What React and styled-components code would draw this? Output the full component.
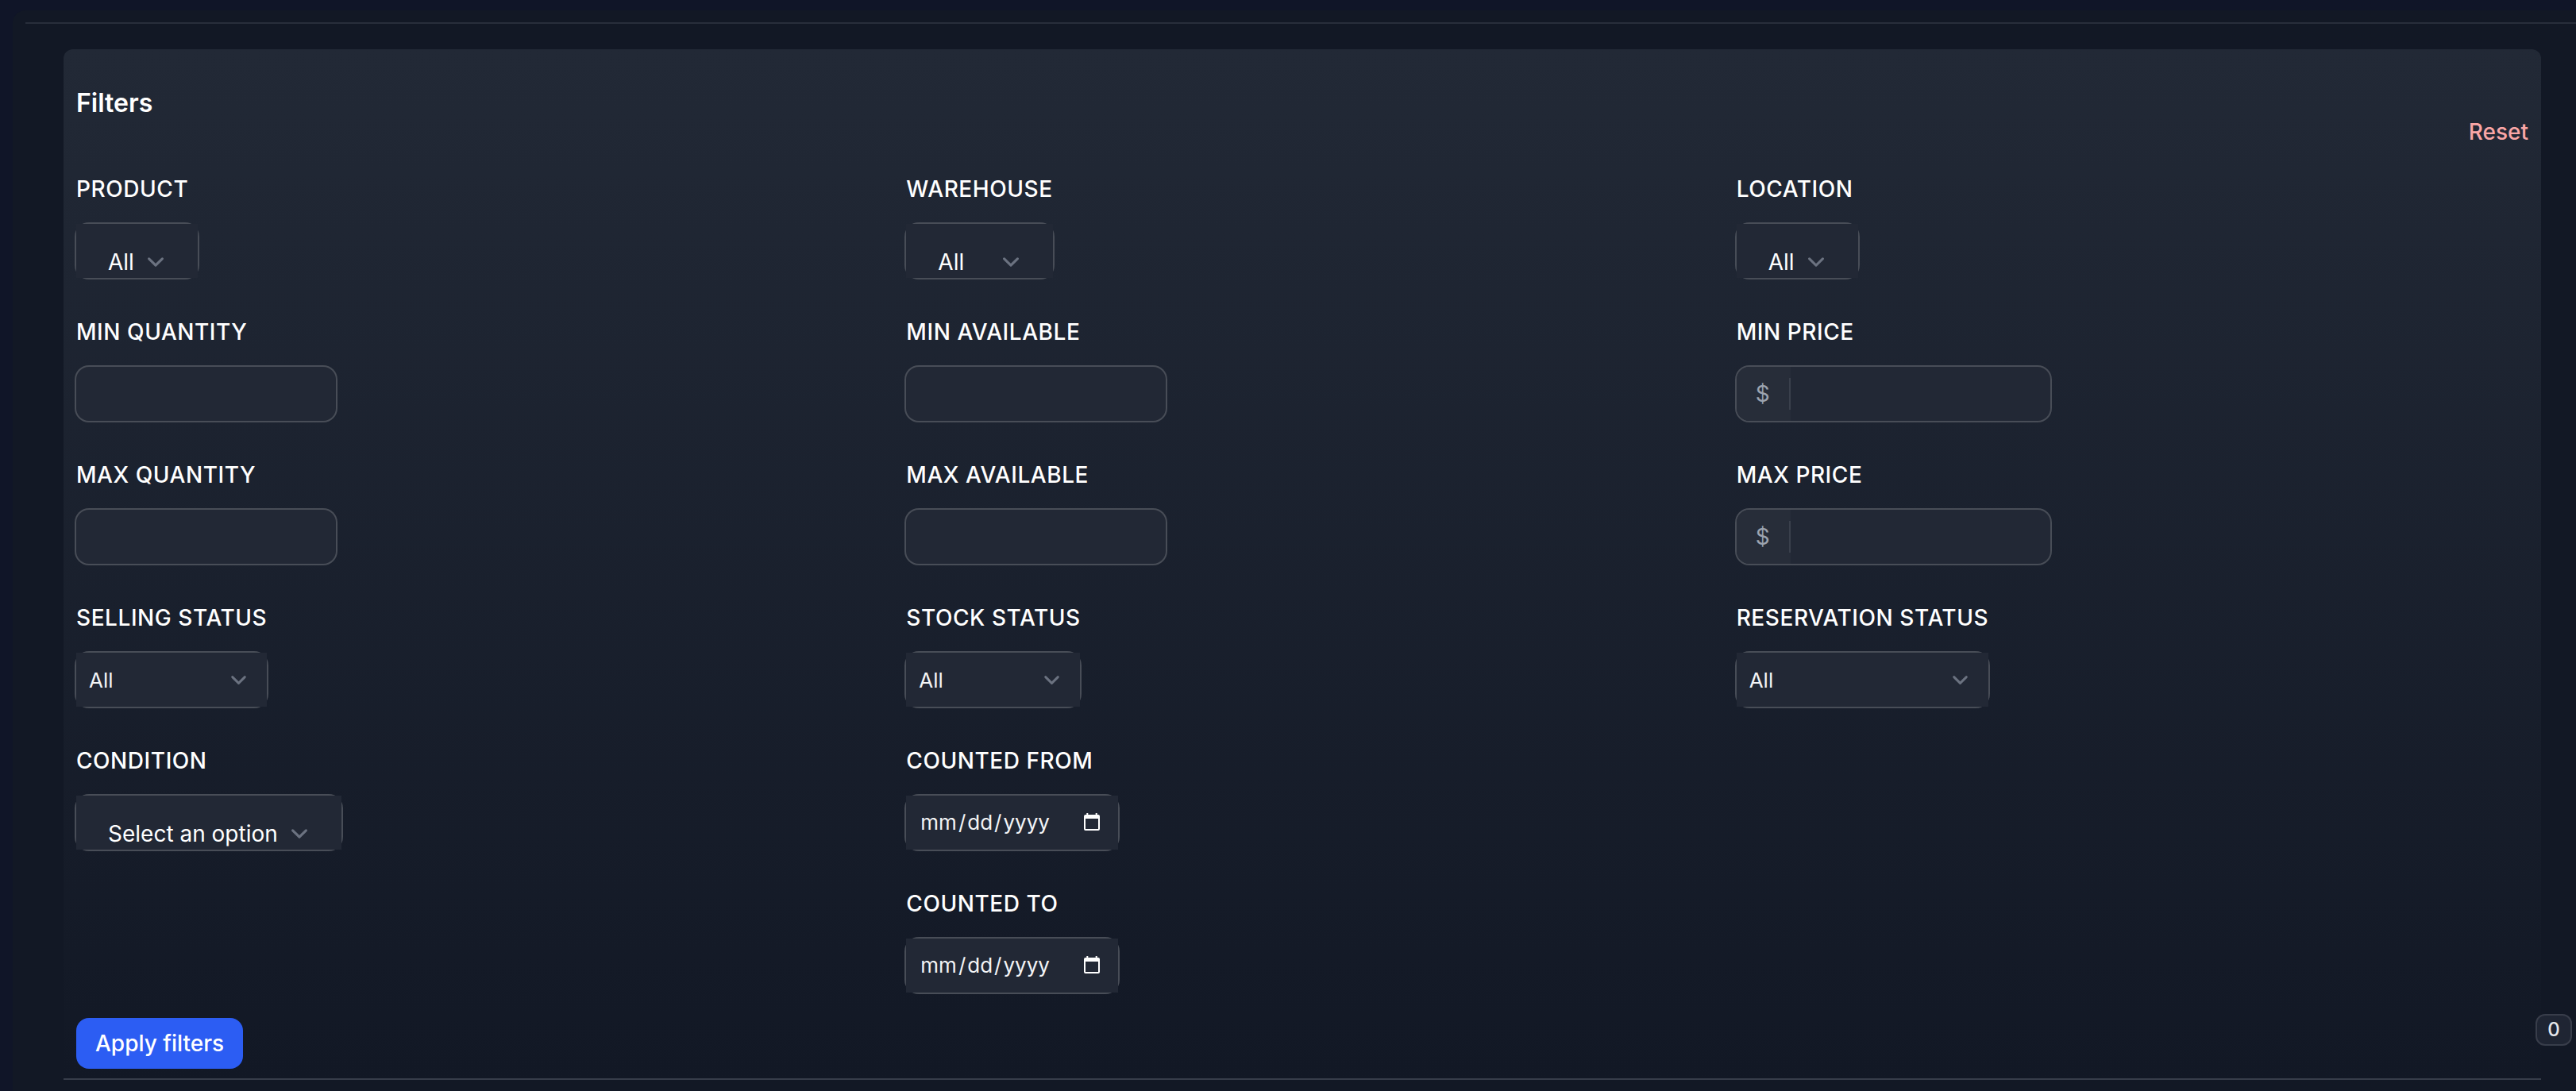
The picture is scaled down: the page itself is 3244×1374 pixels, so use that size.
import React, { useState } from 'react';
import styled, { createGlobalStyle } from 'styled-components';

const GlobalStyle = createGlobalStyle`
  * {
    box-sizing: border-box;
  }

  body {
    margin: 0;
    background: #101528;
    color: #fff;
    font-family: Inter, 'Liberation Sans', sans-serif;
    font-size: 28px;
    line-height: 40px;
    overflow: hidden;
    -webkit-font-smoothing: antialiased;
  }
`;

const Page = styled.div`
  height: 1374px;
  padding: 13px 0 0 16px;
  overflow: hidden;
`;

const Card = styled.div`
  height: 1400px;
  padding: 15px 0 0 16px;
  background: #121825;
  border-top-left-radius: 16px;
`;

const Section = styled.div`
  border-top: 2px solid #282e3b;
  padding: 32px 44px 0 48px;
`;

const Panel = styled.form`
  display: flex;
  flex-direction: column;
  height: 1298px;
  padding: 44px 16px 0;
  border-bottom: 2px solid #373d4a;
  border-radius: 12px 12px 0 0;
  background: linear-gradient(to bottom, #222936, #121825);
`;

const Title = styled.h2`
  margin: 0;
  font-size: 32px;
  font-weight: 600;
  line-height: 48px;
`;

const ResetLink = styled.button`
  align-self: flex-end;
  margin-top: -8px;
  padding: 0;
  border: none;
  background: none;
  color: #faa6a6;
  font: inherit;
  font-weight: 500;
  cursor: pointer;
`;

const Columns = styled.div`
  display: grid;
  grid-template-columns: repeat(3, 1fr);
  gap: 48px;
  margin-top: 32px;
`;

const Column = styled.div`
  display: flex;
  flex-direction: column;
  align-items: flex-start;
  gap: 48px;
`;

const Field = styled.div`
  display: flex;
  flex-direction: column;
  align-items: flex-start;
  gap: 24px;
`;

const Label = styled.label`
  font-weight: 500;
  letter-spacing: 0.02em;
  text-transform: uppercase;
`;

const Ring = styled.div`
  display: flex;
  height: 68px;
  width: ${props => props.$width}px;
  border-radius: 16px;
  box-shadow: 0 0 0 2px #484d57;
  background: #222835;
`;

/* The control is square, so it covers the rounded corners of its ring */
const Control = styled.div`
  display: flex;
  align-items: center;
  justify-content: space-between;
  width: 100%;
  height: 68px;
  padding: ${props => (props.$nested ? '28px 32px 0 40px' : '0 16px')};
  background: #222835;
  font-size: ${props => (props.$nested ? 28 : 26)}px;
  color: ${props => (props.$nested ? '#fff' : '#f3f4f6')};
  white-space: nowrap;
`;

const SelectValue = styled.span`
  padding-top: ${props => (props.$nested ? 0 : 2)}px;
`;

const Chevron = styled.svg`
  flex: none;
  width: 1.5em;
  height: 1.5em;
  fill: none;
  stroke: #6b7280;
  stroke-width: 1.5;
  stroke-linecap: round;
  stroke-linejoin: round;
`;

const TextInput = styled.input`
  width: 100%;
  padding: 0 24px;
  border: none;
  outline: none;
  background: transparent;
  color: #fff;
  font: inherit;
`;

const Prefix = styled.div`
  display: flex;
  flex: none;
  align-items: center;
  width: 68px;
  border-radius: 16px 0 0 16px;
  background: #272d39;
  color: #9ca3af;

  span {
    flex: 1;
    padding-left: 24px;
    border-right: 2px solid #3a404c;
  }
`;

const DateControl = styled(Control)`
  padding: 0 22px 0 16px;
`;

const DateText = styled.span`
  display: flex;

  span {
    padding: 0 2px;
  }
`;

const CalendarIcon = styled.svg`
  width: 22px;
  height: 24px;
  fill: #fff;
`;

const ApplyButton = styled.button`
  align-self: flex-start;
  height: 64px;
  margin-top: 32px;
  padding: 0 24px;
  border: none;
  border-radius: 16px;
  background: #2c5df3;
  color: #fff;
  font: inherit;
  font-weight: 500;
  cursor: pointer;
`;

const CountBadge = styled.div`
  position: absolute;
  left: 3193px;
  top: 1277px;
  width: 46px;
  height: 40px;
  border: 2px solid #383d4a;
  border-radius: 12px;
  background: #1f2533;
  color: #e5e7eb;
  font-size: 24px;
  font-weight: 500;
  line-height: 36px;
  text-align: center;
`;

const columns = [
  [
    { label: 'Product', type: 'nested', value: 'All', width: 153 },
    { label: 'Min quantity', type: 'text', width: 327 },
    { label: 'Max quantity', type: 'text', width: 327 },
    { label: 'Selling status', type: 'select', value: 'All', width: 240 },
    { label: 'Condition', type: 'nested', value: 'Select an option', width: 334 },
  ],
  [
    { label: 'Warehouse', type: 'nested', value: 'All', width: 185 },
    { label: 'Min available', type: 'text', width: 327 },
    { label: 'Max available', type: 'text', width: 327 },
    { label: 'Stock status', type: 'select', value: 'All', width: 219 },
    { label: 'Counted from', type: 'date', width: 267 },
    { label: 'Counted to', type: 'date', width: 267 },
  ],
  [
    { label: 'Location', type: 'nested', value: 'All', width: 153 },
    { label: 'Min price', type: 'price', width: 395 },
    { label: 'Max price', type: 'price', width: 395 },
    { label: 'Reservation status', type: 'select', value: 'All', width: 317 },
  ],
];

function Select({ value, nested }) {
  return (
    <Control $nested={nested}>
      <SelectValue $nested={nested}>{value}</SelectValue>
      <Chevron viewBox="0 0 20 20">
        <path d="M6 8l4 4 4-4" />
      </Chevron>
    </Control>
  );
}

function DateInput() {
  return (
    <DateControl>
      <DateText>
        <span>mm</span>/<span>dd</span>/<span>yyyy</span>
      </DateText>
      <CalendarIcon viewBox="0 0 22 24">
        <path
          fillRule="evenodd"
          d="M4.3 0h2v2h9.4V0h2v2H19a2 2 0 0 1 2 2v16a2 2 0 0 1-2 2H3a2 2 0 0 1-2-2V4a2 2 0 0 1 2-2h1.3zM3 7v13h16V7z"
        />
      </CalendarIcon>
    </DateControl>
  );
}

function FilterField({ label, type, value, width }) {
  const [text, setText] = useState('');
  const handleChange = (e) => setText(e.target.value);

  return (
    <Field>
      <Label>{label}</Label>
      <Ring $width={width}>
        {type === 'price' && (
          <Prefix>
            <span>$</span>
          </Prefix>
        )}
        {(type === 'text' || type === 'price') && (
          <TextInput value={text} onChange={handleChange} />
        )}
        {type === 'select' && <Select value={value} />}
        {type === 'nested' && <Select value={value} nested />}
        {type === 'date' && <DateInput />}
      </Ring>
    </Field>
  );
}

function App() {
  return (
    <>
      <GlobalStyle />
      <Page>
        <Card>
          <Section>
            <Panel onSubmit={(e) => e.preventDefault()}>
              <Title>Filters</Title>
              <ResetLink type="reset">Reset</ResetLink>
              <Columns>
                {columns.map((fields, index) => (
                  <Column key={index}>
                    {fields.map((field) => (
                      <FilterField key={field.label} {...field} />
                    ))}
                  </Column>
                ))}
              </Columns>
              <ApplyButton type="submit">Apply filters</ApplyButton>
            </Panel>
          </Section>
        </Card>
        <CountBadge>0</CountBadge>
      </Page>
    </>
  );
}

export default App;
